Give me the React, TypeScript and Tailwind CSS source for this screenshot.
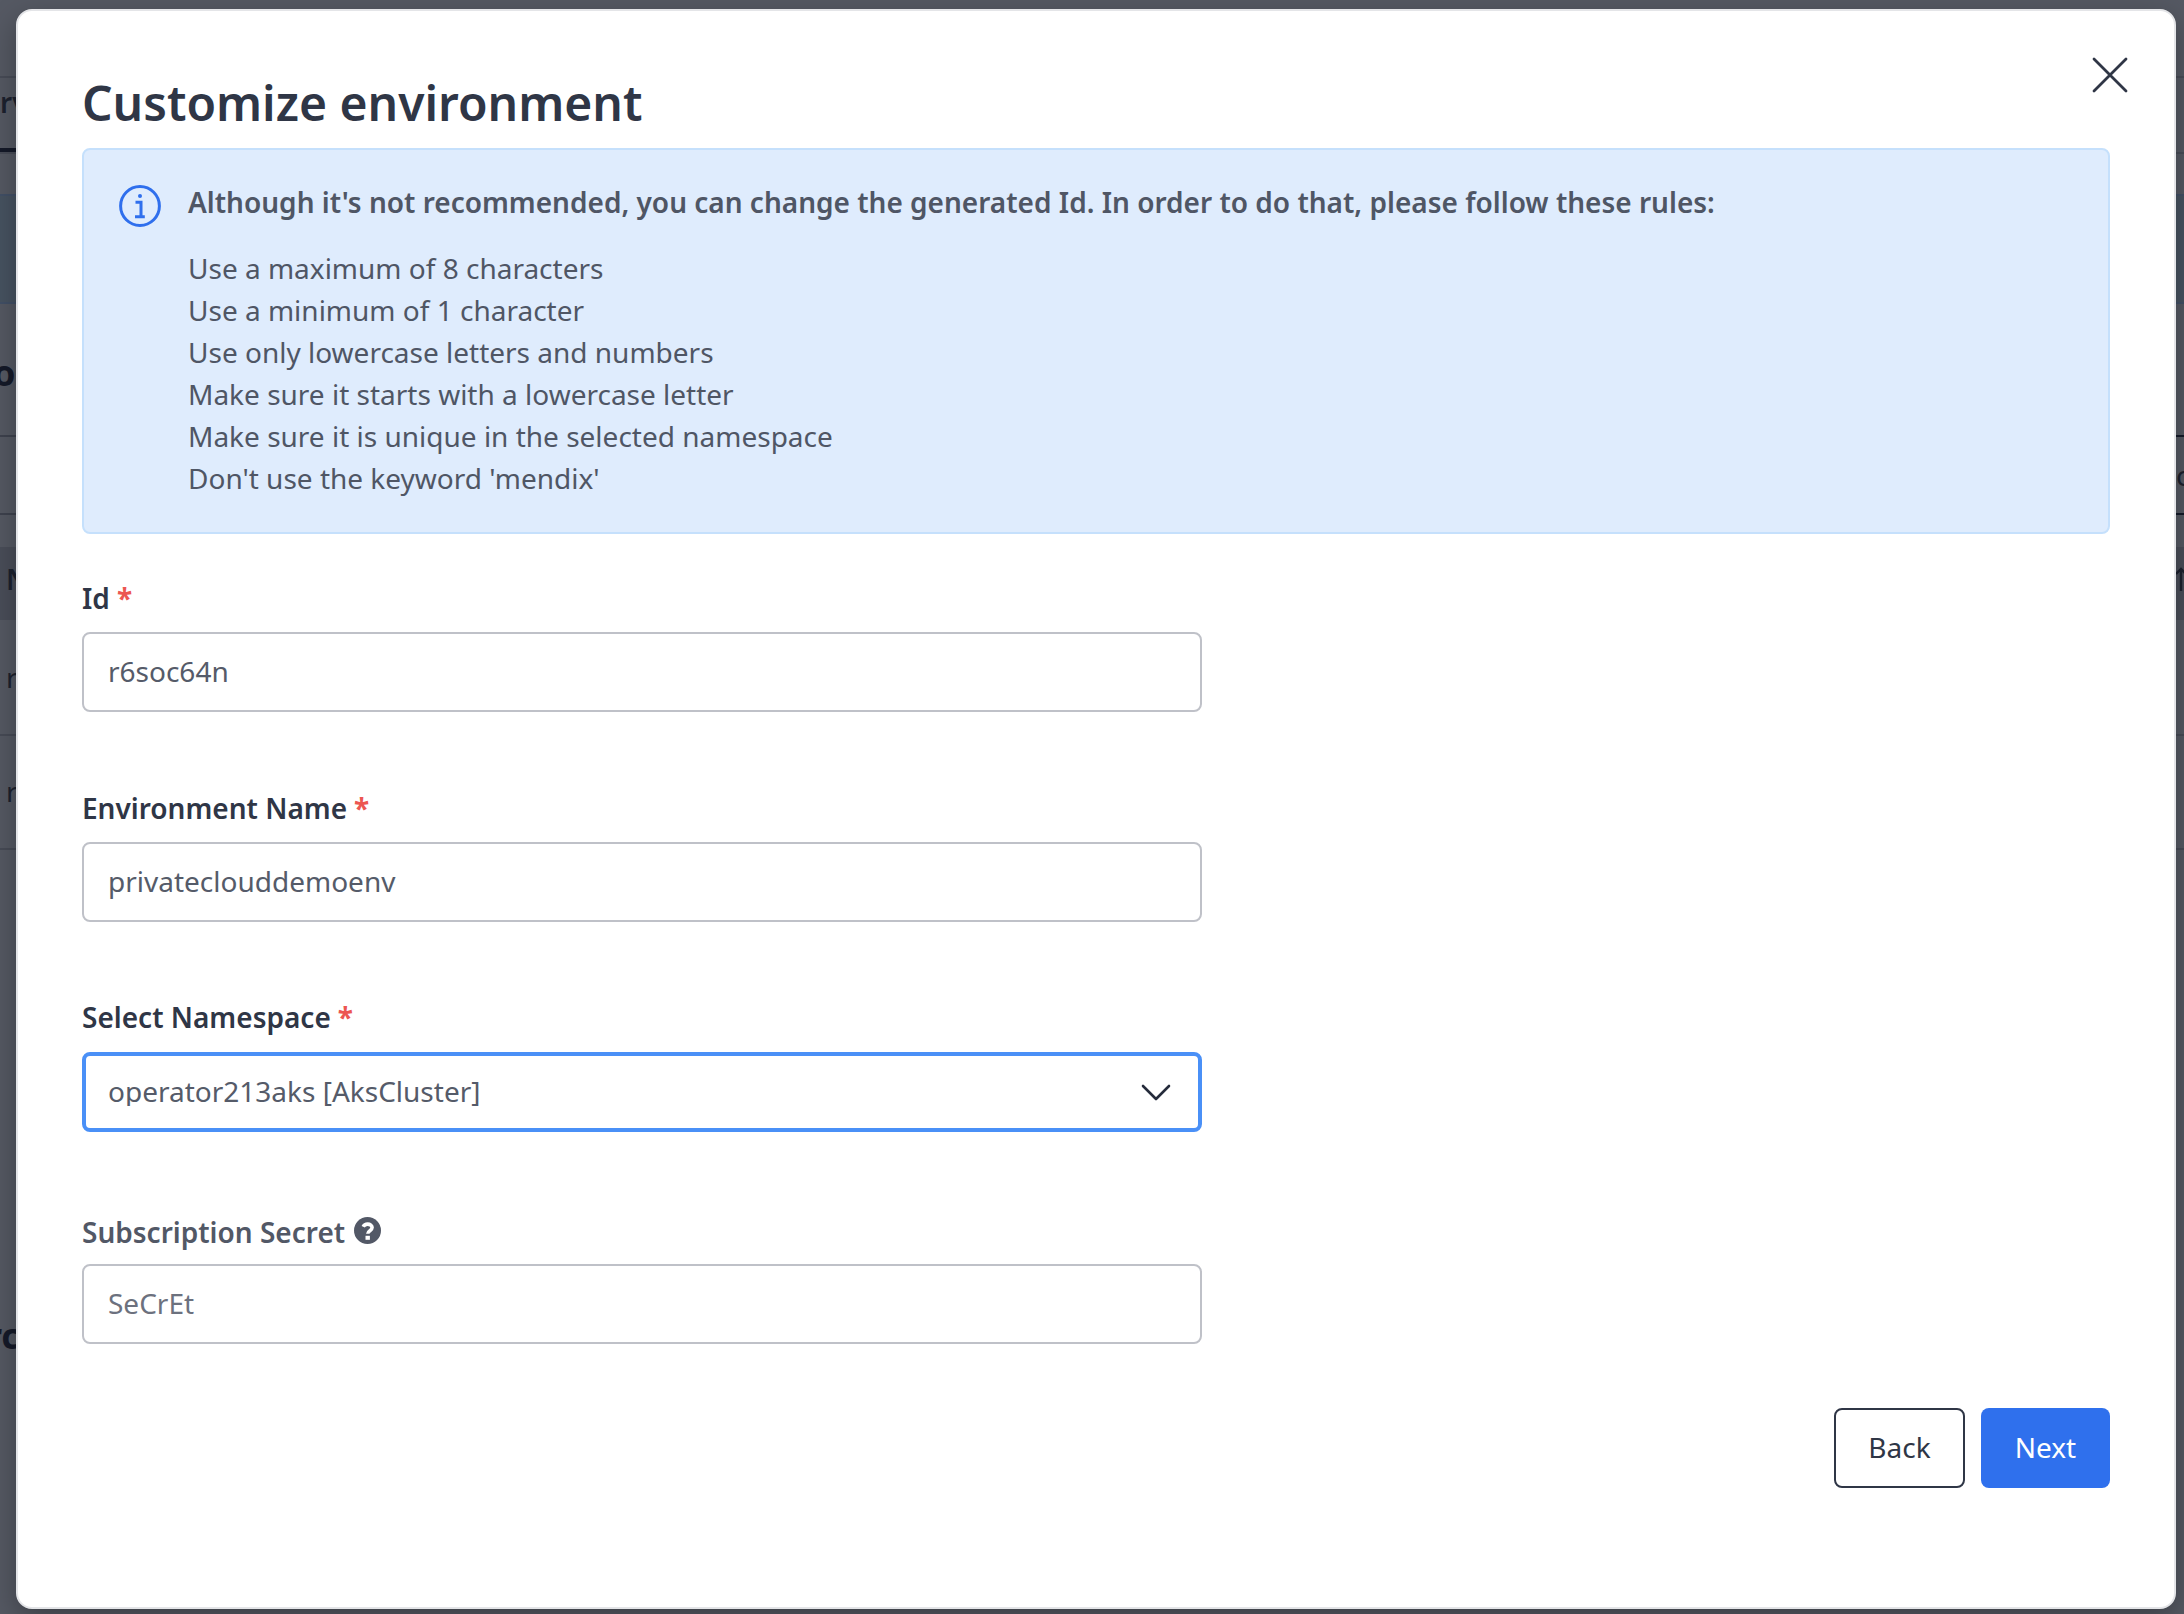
import React from "react";

const rules = [
  "Use a maximum of 8 characters",
  "Use a minimum of 1 character",
  "Use only lowercase letters and numbers",
  "Make sure it starts with a lowercase letter",
  "Make sure it is unique in the selected namespace",
  "Don't use the keyword 'mendix'",
];

function Backdrop() {
  return (
    <div className="flex h-full flex-col text-[28px] leading-[42px] text-[#1c212e]">
      <div className="h-[78px] shrink-0 border-b-2 border-[#484c57]" />
      <div className="flex h-[76px] shrink-0 justify-between border-b-2 border-[#484c57]">
        <div className="h-[74px] w-[16px] overflow-hidden border-b-4 border-[#151a29] pt-[3px] font-semibold">rv</div>
      </div>
      <div className="mt-[40px] h-[110px] shrink-0 border-y-2 border-[#425066] bg-[#475361]" />
      <div className="flex h-[131px] shrink-0 items-start pt-[44px]">
        <span className="-ml-[7px] text-[36px] font-bold leading-[50px] text-[#151a29]">o</span>
      </div>
      <div className="flex h-[80px] shrink-0 justify-between border-y-2 border-[#3e424e]">
        <span />
        <span className="-my-[2px] h-[80px] w-[8px] overflow-hidden border-y-2 border-[#151a29] pt-[17px]">c</span>
      </div>
      <div className="mt-[32px] flex h-[73px] shrink-0 items-start justify-between bg-[#4a4e59] pt-[11px]">
        <span className="pl-[6px] font-semibold">N</span>
        <svg className="mt-[9px] h-[24px] w-[8px]" viewBox="0 0 8 24" fill="none" stroke="currentColor" strokeWidth="2.4">
          <path d="M5 24V2M0 7l5-5 5 5" />
        </svg>
      </div>
      <div className="h-[116px] shrink-0 border-b-2 border-[#474b56] pl-[6px] pt-[36px]">r</div>
      <div className="h-[114px] shrink-0 border-b-2 border-[#474b56] pl-[6px] pt-[34px]">r</div>
      <div className="mt-[459px] -ml-[14px] text-[36px] font-bold leading-[54px] text-[#151a29]">rc</div>
    </div>
  );
}

function Label({ children, required }: { children: React.ReactNode; required?: boolean }) {
  return (
    <label className="flex h-[42px] items-center gap-[7px] whitespace-pre text-[28px] font-semibold leading-[42px] text-[#2f3646]">
      {children}
      {required && <span className="font-bold text-[#ec5651]">*</span>}
    </label>
  );
}

function InfoIcon() {
  return (
    <svg className="mt-[7px] h-[42px] w-[42px] shrink-0" viewBox="0 0 42 42" fill="none" stroke="#2f6fed" strokeWidth="3">
      <circle cx="21" cy="21" r="19.4" />
      <path d="M16.5 17.3H22V32M16 31.8H25.8" />
      <circle cx="21" cy="11" r="2" fill="#2f6fed" stroke="none" />
    </svg>
  );
}

function HelpIcon() {
  return (
    <svg className="-mt-[3px] h-[27px] w-[27px]" viewBox="0 0 27 27">
      <circle cx="13.5" cy="13.5" r="13.5" fill="#525866" />
      <path d="M9.2 9.7C10.1 7.9 11.5 7.1 13.6 7.1c2.6 0 4.5 1.4 4.5 3.5 0 3.1-4.3 3-4.3 6.1" fill="none" stroke="#fff" strokeWidth="3.6" />
      <rect x="11.5" y="18.8" width="4.4" height="4" fill="#fff" />
    </svg>
  );
}

const field =
  "block h-[80px] w-[1120px] rounded-lg border-2 border-[#bfc1c8] bg-white px-[24px] pb-[2px] text-[28px] leading-[42px] text-[#555b69] outline-none placeholder:text-[#6c717e]";

export default function App() {
  return (
    <div className="relative h-[1614px] w-[2184px] overflow-hidden bg-[#555963] font-['Noto_Sans',sans-serif]">
      <Backdrop />
      <div className="absolute left-[16px] top-[9px] flex h-[1600px] w-[2160px] flex-col rounded-2xl border-2 border-[#e4e5e8] bg-white px-[64px] shadow-[0_10px_30px_rgba(0,0,0,0.3)]">
        <div className="flex h-[137px] shrink-0 items-start justify-between">
          <h1 className="pt-[59px] text-[48px] font-semibold leading-[66px] text-[#2f3646]">Customize environment</h1>
          <button className="-mr-[18px] mt-[46px]" aria-label="Close">
            <svg className="h-[36px] w-[36px]" viewBox="0 0 36 36" fill="none" stroke="#2f3646" strokeWidth="2.8" strokeLinecap="round">
              <path d="M2 2 34 34M34 2 2 34" />
            </svg>
          </button>
        </div>
        <div className="flex h-[386px] shrink-0 gap-[27px] rounded-lg border-2 border-[#c5e0fc] bg-[#dfecfd] pl-[35px] pt-[28px] text-[28px] leading-[42px] text-[#4f5665]">
          <InfoIcon />
          <div>
            <p className="mt-[3px] font-semibold">
              Although it's not recommended, you can change the generated Id. In order to do that, please follow these rules:
            </p>
            <ul className="mt-[24px]">
              {rules.map((r) => (
                <li key={r}>{r}</li>
              ))}
            </ul>
          </div>
        </div>

        <div className="mt-[43px] flex flex-col gap-[13px]">
          <Label required>Id</Label>
          <input className={field} defaultValue="r6soc64n" />
        </div>
        <div className="mt-[75px] flex flex-col gap-[13px]">
          <Label required>Environment Name</Label>
          <input className={field} defaultValue="privateclouddemoenv" />
        </div>
        <div className="mt-[74px] flex flex-col gap-[14px]">
          <Label required>Select Namespace</Label>
          <div className="flex h-[80px] w-[1120px] items-center justify-between rounded-lg border-4 border-[#4a90f7] pl-[22px] pr-[27px] text-[28px] text-[#555b69]">
            <span className="-mt-[2px] block overflow-hidden leading-[30px]">operator213aks [AksCluster]</span>
            <svg className="h-[18px] w-[30px]" viewBox="0 0 30 18" fill="none" stroke="#252b3b" strokeWidth="2.6" strokeLinecap="round" strokeLinejoin="round">
              <path d="M2 3 15 16 28 3" />
            </svg>
          </div>
        </div>
        <div className="mt-[79px] flex flex-col gap-[11px]">
          <label className="flex h-[42px] items-center gap-[9px] text-[28px] font-semibold leading-[42px] text-[#525866]">
            Subscription Secret
            <HelpIcon />
          </label>
          <input className={field} placeholder="SeCrEt" />
        </div>

        <div className="mt-[64px] flex justify-end gap-[16px] text-[28px] leading-[42px]">
          <button className="h-[80px] w-[131px] rounded-lg border-2 border-[#2f3646] pb-[2px] text-[#2f3646]">Back</button>
          <button className="h-[80px] w-[129px] rounded-lg bg-[#2f70ed] pb-[2px] text-white">Next</button>
        </div>
      </div>
    </div>
  );
}
